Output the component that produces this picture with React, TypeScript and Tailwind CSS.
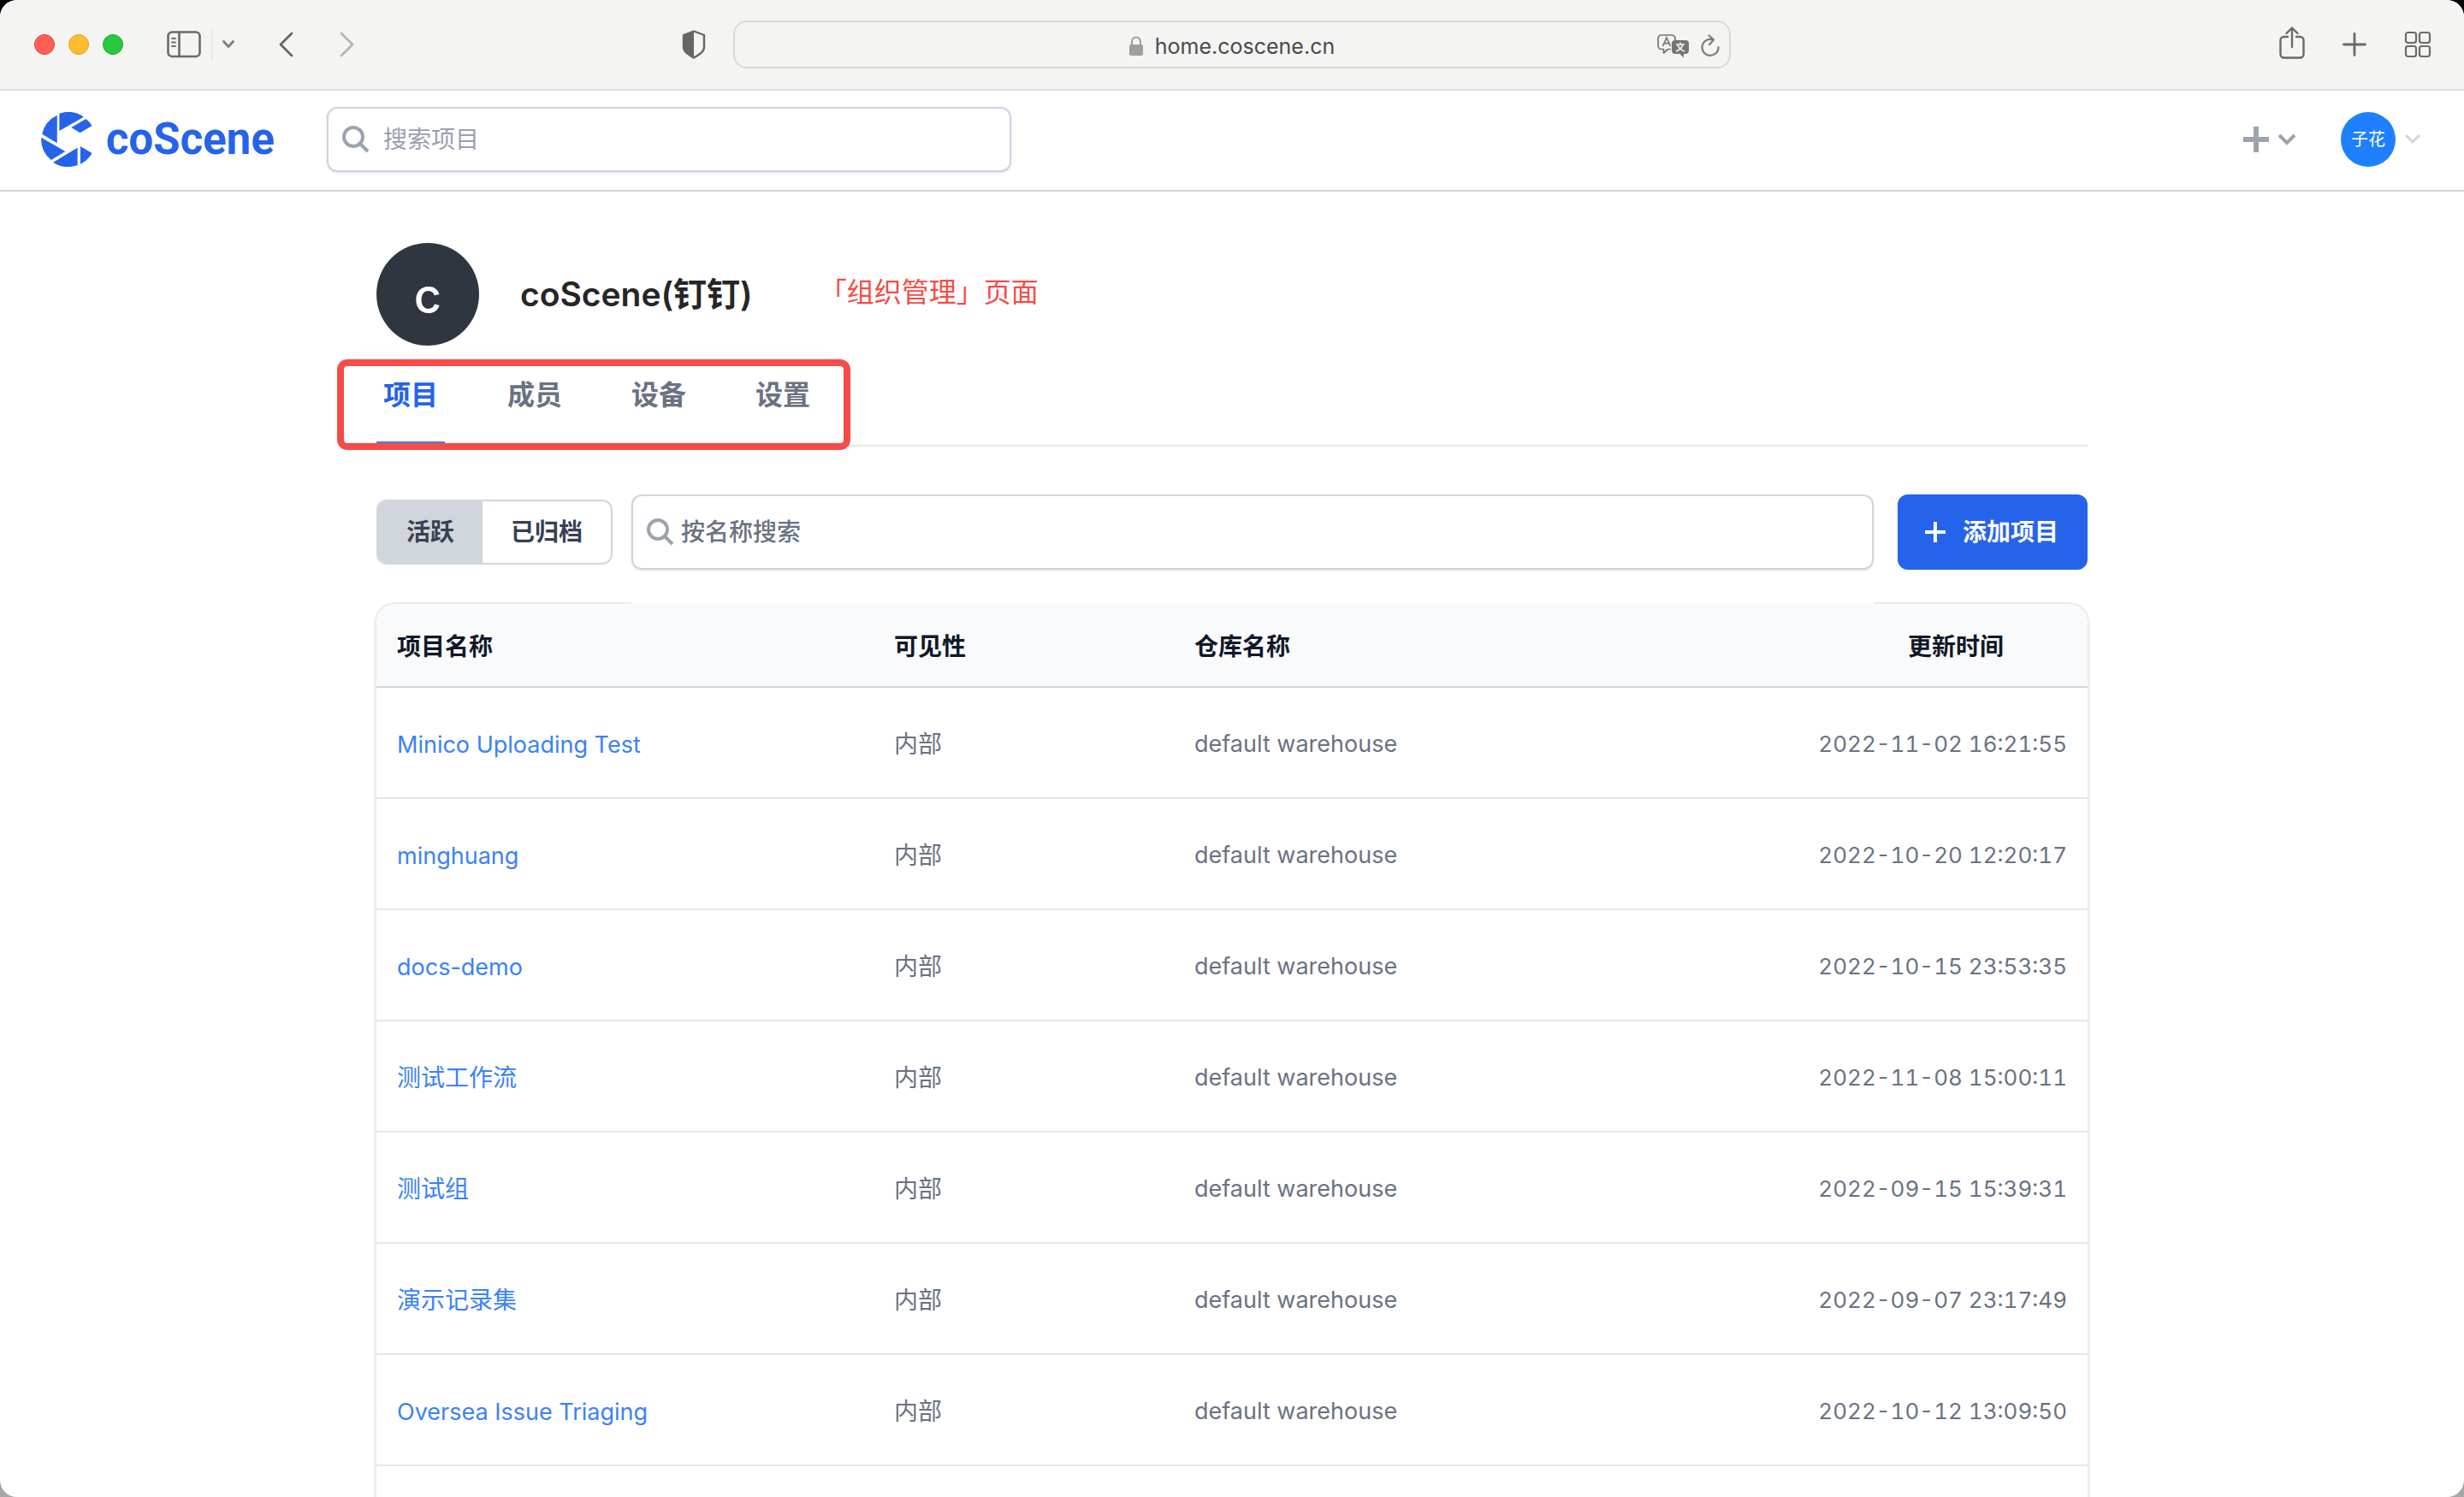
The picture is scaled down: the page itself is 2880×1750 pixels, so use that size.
import React from "react";

const projects = [
  { name: "Minico Uploading Test", updated: "2022-11-02 16:21:55" },
  { name: "minghuang", updated: "2022-10-20 12:20:17" },
  { name: "docs-demo", updated: "2022-10-15 23:53:35" },
  { name: "测试工作流", updated: "2022-11-08 15:00:11" },
  { name: "测试组", updated: "2022-09-15 15:39:31" },
  { name: "演示记录集", updated: "2022-09-07 23:17:49" },
  { name: "Oversea Issue Triaging", updated: "2022-10-12 13:09:50" },
];

const tabs = ["项目", "成员", "设备", "设置"];

function SearchIcon() {
  return (
    <svg viewBox="0 0 32 32" className="size-8 shrink-0" fill="none" stroke="#9ca3af" strokeWidth="4" aria-hidden="true">
      <circle cx="13" cy="13" r="11" />
      <path d="M20.500 20.500 30 30" />
    </svg>
  );
}

function SidebarIcon() {
  return (
    <svg viewBox="0 0 40 32" className="h-8 w-10" fill="none" stroke="#6b6b69" aria-hidden="true">
      <rect x="1.500" y="1.500" width="37" height="28.500" rx="4.500" strokeWidth="2.600" />
      <path d="M14.500 1.500v28.500" strokeWidth="2.600" />
      <path d="M6 9h4M6 13.500h4M6 18h4" strokeWidth="1.800" strokeLinecap="round" />
    </svg>
  );
}

function TranslateIcon() {
  return (
    <svg viewBox="0 0 38 28" className="h-7 w-[38px]" aria-hidden="true">
      <path
        d="M16 17.500h-3.500L7.500 22v-4.500H5a4 4 0 0 1-4-4V5a4 4 0 0 1 4-4h12a4 4 0 0 1 4 4v2"
        fill="none"
        stroke="#757573"
        strokeWidth="1.700"
        strokeLinejoin="round"
      />
      <path d="M6.500 14 11 4l4.500 10M8 10.700h6" fill="none" stroke="#757573" strokeWidth="1.700" />
      <path d="M21 7h12a4 4 0 0 1 4 4v8a4 4 0 0 1-4 4h-2v4.500L26.500 23H21a4 4 0 0 1-4-4v-8a4 4 0 0 1 4-4z" fill="#757573" />
      <path d="M22 12h10M27 9.500V12M30 12c-1 4-4 6.500-8 8M24 12.500c1 3.500 4 6 8 7.500" fill="none" stroke="#f4f4f2" strokeWidth="1.700" />
    </svg>
  );
}

function LogoMark() {
  return (
    <svg viewBox="144 392 180 193" className="h-16 w-[60px]" fill="#2563eb" aria-hidden="true">
      <path d="M208 397A96.500 96.500 0 0 1 294 409L208 458Z" />
      <path d="M250 446 302 416A96.500 96.500 0 0 1 323 440L281 465Z" />
      <path d="M200 403V501L147 470A96.500 96.500 0 0 1 200 403Z" />
      <path d="M144 482 229 531 179 561A96.500 96.500 0 0 1 144 482Z" />
      <path d="M272 518V579A96.500 96.500 0 0 1 186 569Z" />
      <path d="M282 513 323 537A96.500 96.500 0 0 1 282 576Z" />
    </svg>
  );
}

function BrowserBar() {
  return (
    <div className="grid h-[106px] shrink-0 grid-cols-[1fr_minmax(0,1166px)_1fr] items-center border-b-2 border-[#dcdcdc] bg-[#f4f4f2]">
      <div className="flex items-center pl-10 pr-8">
        <div className="flex gap-4">
          <button aria-label="关闭" className="size-6 rounded-full border border-[#e2463f] bg-[#ff5f57]" />
          <button aria-label="最小化" className="size-6 rounded-full border border-[#e0a028] bg-[#febc2e]" />
          <button aria-label="全屏" className="size-6 rounded-full border border-[#1dad2b] bg-[#28c840]" />
        </div>
        <button aria-label="边栏" className="ml-[51px]">
          <SidebarIcon />
        </button>
        <span className="ml-3 h-9 w-0.5 bg-[#e6e6e4]" />
        <button aria-label="标签页组" className="ml-2.5">
          <svg viewBox="0 0 16 10" className="h-2.5 w-4" fill="none" stroke="#7d7d7b" strokeWidth="2.800" strokeLinecap="round" strokeLinejoin="round">
            <path d="M2.500 1.500 8 7.500l5.500-6" />
          </svg>
        </button>
        <button aria-label="后退" className="ml-[50px]">
          <svg viewBox="0 0 18 30" className="h-[30px] w-[18px]" fill="none" stroke="#656563" strokeWidth="2.800" strokeLinecap="round" strokeLinejoin="round">
            <path d="M16 2 3 15l13 13" />
          </svg>
        </button>
        <button aria-label="前进" className="ml-[54px]">
          <svg viewBox="0 0 18 30" className="h-[30px] w-[18px]" fill="none" stroke="#b4b4b2" strokeWidth="2.800" strokeLinecap="round" strokeLinejoin="round">
            <path d="M2 2l13 13L2 28" />
          </svg>
        </button>
        <button aria-label="隐私报告" className="ml-auto">
          <svg viewBox="0 0 28 34" className="h-[34px] w-7" aria-hidden="true">
            <path d="M14 1.500 26 6v14c0 5-4 8-12 12.500C6 28 2 25 2 20V6z" fill="none" stroke="#666664" strokeWidth="2.400" strokeLinejoin="round" />
            <path d="M14 1.500v31C6 28 2 25 2 20V6z" fill="#666664" />
          </svg>
        </button>
      </div>
      <div className="flex h-14 items-center rounded-2xl border-2 border-[#d8d8d6] px-2.5 pt-1">
        <div className="flex-1" />
        <svg viewBox="0 0 16 24" className="mr-3.5 h-6 w-4" aria-hidden="true">
          <rect x="0" y="10" width="16" height="13" rx="2" fill="#9f9f9d" />
          <path d="M3 11V6.500a5 5 0 0 1 10 0V11" fill="none" stroke="#9f9f9d" strokeWidth="2" />
        </svg>
        <input
          aria-label="地址"
          defaultValue="home.coscene.cn"
          className="field-sizing-content bg-transparent text-[25px] leading-8 text-[#4a4a4a] outline-none"
        />
        <div className="flex flex-1 items-center justify-end gap-3">
          <button aria-label="翻译">
            <TranslateIcon />
          </button>
          <button aria-label="重新载入">
            <svg viewBox="0 0 24 28" className="h-7 w-6" fill="none" stroke="#7c7c7a" strokeWidth="2.200" strokeLinecap="round" strokeLinejoin="round">
              <path d="M15.500 6.500A9.500 9.500 0 1 0 21.500 15M10.500 1.500l5.500 5-5 5.500" />
            </svg>
          </button>
        </div>
      </div>
      <div className="flex items-center justify-end gap-11 pr-[38px]">
        <button aria-label="共享">
          <svg viewBox="0 0 30 42" className="h-[42px] w-[30px]" fill="none" stroke="#6b6b69" strokeWidth="2.400" strokeLinecap="round" strokeLinejoin="round">
            <path d="M10 12H5.500A4 4 0 0 0 1.500 16v16.500a4 4 0 0 0 4 4h19a4 4 0 0 0 4-4V16a4 4 0 0 0-4-4H20M15 24V2M8.500 8 15 1.500 21.500 8" />
          </svg>
        </button>
        <button aria-label="新标签页">
          <svg viewBox="0 0 28 28" className="size-7" fill="none" stroke="#6b6b69" strokeWidth="2.800" strokeLinecap="round">
            <path d="M14 1.500v25M1.500 14h25" />
          </svg>
        </button>
        <button aria-label="标签页概览">
          <svg viewBox="0 0 32 32" className="size-8" fill="none" stroke="#6b6b69" strokeWidth="2.200">
            <rect x="2" y="2" width="12" height="12" rx="2.500" />
            <rect x="18" y="2" width="12" height="12" rx="2.500" />
            <rect x="2" y="18" width="12" height="12" rx="2.500" />
            <rect x="18" y="18" width="12" height="12" rx="2.500" />
          </svg>
        </button>
      </div>
    </div>
  );
}

function AppHeader() {
  return (
    <header className="flex h-[118px] shrink-0 items-center border-b-2 border-gray-300 pb-0.5 pl-12 pr-[50px]">
      <a href="#" className="flex items-center gap-4 text-[#2563eb]">
        <LogoMark />
        <span className="w-[198px] font-[Roboto,sans-serif] text-[51px] leading-[60px] font-bold">coScene</span>
      </a>
      <label className="ml-[60px] flex h-[76px] w-[800px] items-center gap-4 rounded-xl border-2 border-slate-300 px-4 shadow-sm">
        <SearchIcon />
        <input aria-label="搜索项目" placeholder="搜索项目" className="min-w-0 flex-1 text-[28px] leading-10 outline-none placeholder:text-gray-400" />
      </label>
      <button aria-label="新建" className="ml-auto flex items-center gap-2.5">
        <svg viewBox="0 0 30 30" className="size-[30px]" stroke="#9ca3af" strokeWidth="6">
          <path d="M15 0v30M0 15h30" />
        </svg>
        <svg viewBox="0 0 22 14" className="h-3.5 w-[22px]" fill="none" stroke="#9ca3af" strokeWidth="4">
          <path d="M2 2l9 9 9-9" />
        </svg>
      </button>
      <button aria-label="账户" className="ml-[52px] flex items-center gap-2.5">
        <span className="flex size-16 items-center justify-center rounded-full bg-[#1f80ff] font-['Liberation_Serif','Noto_Sans_CJK_SC',serif] text-xl text-white">
          子花
        </span>
        <svg viewBox="0 0 20 12" className="h-3 w-5" fill="none" stroke="#d1d5db" strokeWidth="3">
          <path d="M2 1l8 8 8-8" />
        </svg>
      </button>
    </header>
  );
}

export default function App() {
  return (
    <div className="h-screen bg-linear-to-b from-black to-[#a8a8a8] font-[Inter,'Noto_Sans_CJK_SC',sans-serif]">
      <div className="flex h-full flex-col overflow-hidden rounded-[20px] bg-white">
        <BrowserBar />
        <AppHeader />
        <main className="mx-auto flex w-full max-w-[2004px] min-h-0 flex-1 flex-col pt-[60px]">
          <div className="flex items-center px-0.5">
            <div className="flex size-[120px] items-center justify-center rounded-full bg-[#303640] pt-1 text-[56px] leading-[60px] font-medium text-white">
              c
            </div>
            <h1 className="ml-12 text-[39px] leading-[60px] font-semibold text-[#262626]">coScene(钉钉)</h1>
            <p className="ml-[78px] pb-1 text-[32px] leading-[60px] text-[#f74b47]">「组织管理」页面</p>
          </div>

          <nav className="relative mx-0.5 mt-4 flex gap-[65px] border-b-2 border-gray-200">
            {tabs.map((tab, i) => (
              <button
                key={tab}
                className={
                  i === 0
                    ? "flex h-[100px] items-start border-b-4 border-[#3b82f6] px-2 pt-[22px] text-[32px] leading-10 font-semibold text-[#2563eb]"
                    : "flex h-[100px] items-start px-2 pt-[22px] text-[32px] leading-10 font-semibold text-gray-500"
                }
              >
                {tab}
              </button>
            ))}
            <span className="pointer-events-none absolute top-0 -left-[46px] h-[106px] w-[600px] rounded-xl border-8 border-[#f74b47]" />
          </nav>

          <div className="mx-0.5 mt-14 flex items-center text-[28px] leading-10 font-semibold">
            <div role="group" aria-label="状态" className="flex h-[76px] shrink-0 overflow-hidden rounded-xl border-2 border-gray-300 text-gray-700">
              <button aria-pressed="true" className="bg-gray-300 px-[33px]">活跃</button>
              <button aria-pressed="false" className="px-[33px]">已归档</button>
            </div>
            <div className="relative z-10 mr-7 ml-[22px] min-w-0 flex-1">
              <label className="flex h-[88px] items-center gap-2 rounded-xl border-2 border-gray-300 px-4 shadow-sm">
                <SearchIcon />
                <input aria-label="按名称搜索" placeholder="按名称搜索" className="min-w-0 flex-1 font-medium outline-none placeholder:text-gray-500" />
              </label>
              <span className="absolute inset-x-0 -bottom-10 h-1 bg-white" />
            </div>
            <button className="flex h-[88px] shrink-0 items-center gap-5 rounded-xl bg-[#2563eb] pr-[34px] pl-8 text-white">
              <svg viewBox="0 0 24 24" className="size-6" stroke="currentColor" strokeWidth="4" aria-hidden="true">
                <path d="M12 0v24M0 12h24" />
              </svg>
              添加项目
            </button>
          </div>

          <div className="mt-[38px] min-h-0 flex-1 overflow-hidden rounded-t-3xl border-x-2 border-t-2 border-[#ebebed] shadow-sm">
            <table className="w-full table-fixed border-separate border-spacing-0 text-[28px] leading-10">
              <colgroup>
                <col className="w-[581px]" />
                <col className="w-[351px]" />
                <col />
                <col className="w-[440px]" />
              </colgroup>
              <thead className="bg-gray-50 text-left text-gray-900">
                <tr className="h-[98px] *:border-b-2 *:border-gray-300 *:pt-1">
                  <th className="pl-6 font-semibold">项目名称</th>
                  <th className="pl-6 font-semibold">可见性</th>
                  <th className="pl-6 font-semibold">仓库名称</th>
                  <th className="pr-[98px] text-right font-semibold">更新时间</th>
                </tr>
              </thead>
              <tbody className="text-gray-500">
                {projects.map((p) => (
                  <tr key={p.name} className="h-[130px] *:border-b-2 *:border-gray-200 *:pt-1">
                    <td className="pl-6">
                      <a href="#" className={/^[\x20-\x7e]+$/.test(p.name) ? "text-[27px] text-[#3b82f6]" : "text-[#3b82f6]"}>
                        {p.name}
                      </a>
                    </td>
                    <td className="pl-6">内部</td>
                    <td className="pl-6 text-[27px]">default warehouse</td>
                    <td className="pr-6 text-right text-[26px] tabular-nums">{p.updated}</td>
                  </tr>
                ))}
              </tbody>
            </table>
          </div>
        </main>
      </div>
    </div>
  );
}
